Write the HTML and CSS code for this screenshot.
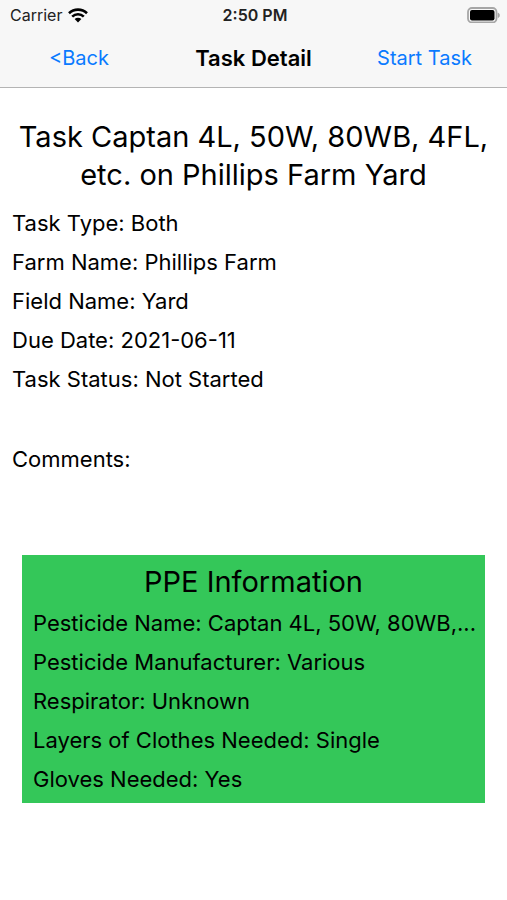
FILE: index.html
```html
<!DOCTYPE html>
<html lang="en">
<head>
<meta charset="utf-8">
<meta name="viewport" content="width=device-width">
<title>Task Detail</title>
<link rel="stylesheet" href="styles.css">
</head>
<body>
<header class="top">
  <div class="status">
    <div class="carrier"><span>Carrier</span>
      <svg class="wifi" viewBox="0 0 20 15" aria-hidden="true"><path d="M1 5.2a13 13 0 0 1 18 0M4.2 8.6a8.3 8.3 0 0 1 11.6 0" fill="none" stroke="#000" stroke-width="2.6"/><path d="M10 14.5 6.6 11a4.9 4.9 0 0 1 6.8 0z"/></svg>
    </div>
    <time class="clock">2:50 PM</time>
    <svg class="battery" viewBox="0 0 33 16" aria-hidden="true"><rect x="1" y="1" width="28.500" height="14.500" rx="4" fill="none" stroke="#a6a6a6" stroke-width="1.800"/><rect x="3" y="3" width="24.500" height="10.500" rx="2"/><path d="M31 6c2 .6 2 4 0 4.600z" fill="#a6a6a6" stroke="#a6a6a6" stroke-width=".6"/></svg>
  </div>
  <nav class="nav">
    <button class="link back">&lt;Back</button>
    <h1 class="heading">Task Detail</h1>
    <button class="link start">Start Task</button>
  </nav>
</header>
<main>
  <h2 class="title">Task Captan 4L, 50W, 80WB, 4FL, etc. on Phillips Farm Yard</h2>
  <div class="details">
    <p class="row">Task Type: Both</p>
    <p class="row">Farm Name: Phillips Farm</p>
    <p class="row">Field Name: Yard</p>
    <p class="row">Due Date: 2021-06-11</p>
    <p class="row">Task Status: Not Started</p>
    <p class="row comments">Comments:</p>
  </div>
  <section class="ppe">
    <h2 class="ppe-title">PPE Information</h2>
    <p class="row">Pesticide Name: Captan 4L, 50W, 80WB,...</p>
    <p class="row">Pesticide Manufacturer: Various</p>
    <p class="row">Respirator: Unknown</p>
    <p class="row">Layers of Clothes Needed: Single</p>
    <p class="row">Gloves Needed: Yes</p>
  </section>
</main>
</body>
</html>
```
FILE: styles.css
```css
* { box-sizing: border-box; }
body { margin: 0; background: #fff; color: #000; font-family: Inter, "Liberation Sans", sans-serif; }
h1, h2, p { margin: 0; font-weight: 400; }
.top { background: #f7f7f7; border-bottom: 1px solid #b4b4b4; }
.status { display: grid; grid-template-columns: 1fr auto 1fr; align-items: center; height: 30px; padding: 0 7px 0 10px; font-size: 16px; }
.carrier { display: flex; align-items: center; gap: 6px; color: #222; }
.wifi { width: 20px; height: 15px; }
.clock { font-weight: 600; color: #222; }
.battery { width: 33px; height: 16px; justify-self: end; }
.nav { display: grid; grid-template-columns: 1fr auto 1fr; align-items: center; height: 57px; padding-bottom: 2px; }
.heading { font-size: 22px; font-weight: 600; }
.link { padding: 0; border: 0; background: none; color: #0a7aff; font: inherit; font-size: 20px; }
.back { justify-self: start; margin-left: 49px; }
.start { justify-self: end; margin-right: 35px; }
.title { padding: 30px 12px 0; font-size: 29px; line-height: 38px; text-align: center; }
.details { padding: 10px 12px 0; }
.row { font-size: 22px; line-height: 39px; white-space: nowrap; overflow: hidden; text-overflow: ellipsis; }
.comments { margin-top: 41px; }
.ppe { margin: 76px 22px 0; padding: 7px 4px 4px 11px; background: #34c759; }
.ppe-title { margin-bottom: 2px; padding-right: 7px; font-size: 29px; line-height: 40px; text-align: center; }
```
